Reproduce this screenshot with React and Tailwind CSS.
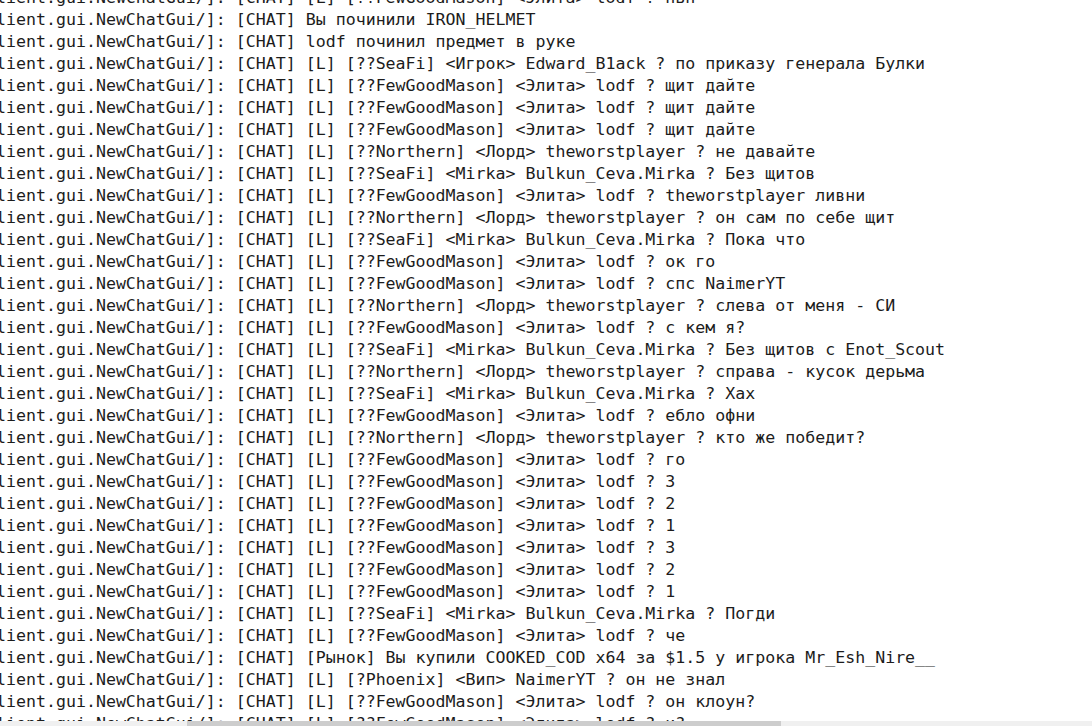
import React from 'react';

const PREFIX = 'lient.gui.NewChatGui/]: [CHAT] ';
const FGM = '[L] [??FewGoodMason] <Элита> lodf ? ';
const SEA = '[L] [??SeaFi] <Mirka> Bulkun_Ceva.Mirka ? ';
const NOR = '[L] [??Northern] <Лорд> theworstplayer ? ';

const lines = [
  FGM + 'ньн',
  'Вы починили IRON_HELMET',
  'lodf починил предмет в руке',
  '[L] [??SeaFi] <Игрок> Edward_B1ack ? по приказу генерала Булки',
  FGM + 'щит дайте',
  FGM + 'щит дайте',
  FGM + 'щит дайте',
  NOR + 'не давайте',
  SEA + 'Без щитов',
  FGM + 'theworstplayer ливни',
  NOR + 'он сам по себе щит',
  SEA + 'Пока что',
  FGM + 'ок го',
  FGM + 'спс NaimerYT',
  NOR + 'слева от меня - СИ',
  FGM + 'с кем я?',
  SEA + 'Без щитов с Enot_Scout',
  NOR + 'справа - кусок дерьма',
  SEA + 'Хах',
  FGM + 'ебло офни',
  NOR + 'кто же победит?',
  FGM + 'го',
  FGM + '3',
  FGM + '2',
  FGM + '1',
  FGM + '3',
  FGM + '2',
  FGM + '1',
  SEA + 'Погди',
  FGM + 'че',
  '[Рынок] Вы купили COOKED_COD x64 за $1.5 у игрока Mr_Esh_Nire__',
  '[L] [?Phoenix] <Вип> NaimerYT ? он не знал',
  FGM + 'он клоун?',
  FGM + 'и?',
];

export default function App() {
  return (
    <div className="w-[1092px] h-[726px] bg-white flex flex-col overflow-hidden">
      {/* log text, scrolled horizontally so the line start is cut */}
      <div className="flex-1 overflow-hidden">
        <div className="-mt-[13px] -ml-[4px] font-['DejaVu_Sans_Mono','Liberation_Mono',monospace] text-[16.6px] leading-[22px] text-[#1c1c1c] whitespace-pre">
          {lines.map((l, i) => (
            <div key={i}>{PREFIX + l}</div>
          ))}
        </div>
      </div>

      {/* horizontal scrollbar */}
      <div className="h-[5px] bg-[#f0f0f0] flex shrink-0">
        <div className="w-[187px]" />
        <div className="w-[594px] bg-[#cdcdcd]" />
      </div>
    </div>
  );
}
